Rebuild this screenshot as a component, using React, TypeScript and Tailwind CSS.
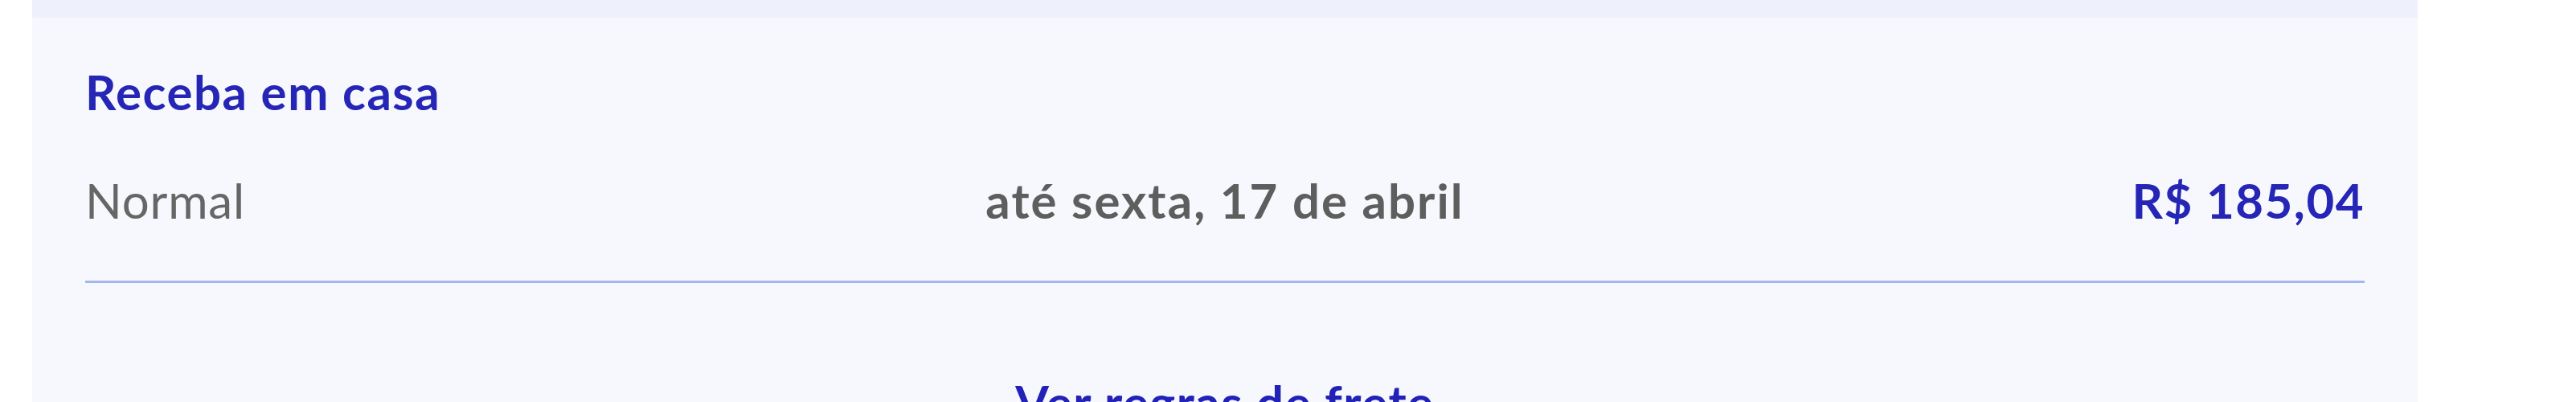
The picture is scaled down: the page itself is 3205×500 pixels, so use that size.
export default function App() {
  return (
    <div className="w-[3205px] h-[500px] bg-white overflow-hidden" style={{ fontFamily: "Lato, 'Open Sans', sans-serif" }}>
      <div className="ml-[40px] w-[2968px] min-h-full bg-[#f7f8fd]">
        {/* top strip */}
        <div className="h-[22px] bg-[#eef0fc]" />

        <div className="px-[66px] pt-[56px]">
          <h2 className="text-[60px] leading-[72px] font-bold text-[#2626b6] tracking-[1.5px]">
            Receba em casa
          </h2>

          <div className="mt-[63px] pb-[64px] border-b-[3px] border-[#a6b6ef] grid grid-cols-[1fr_auto_1fr] items-center text-[60px] leading-[72px]">
            <span className="text-[#666666] tracking-[0.8px]">Normal</span>
            <span className="font-bold text-[#5e5e5e] tracking-[2px]">até sexta, 17 de abril</span>
            <span className="justify-self-end font-bold text-[#2626b6] tracking-[1.5px]">R$ 185,04</span>
          </div>

          <div className="pt-[112px] text-center">
            <a className="text-[60px] leading-[72px] font-bold text-[#2222b8] tracking-[1.5px]">
              Ver regras de frete
            </a>
          </div>
        </div>
      </div>
    </div>
  );
}
